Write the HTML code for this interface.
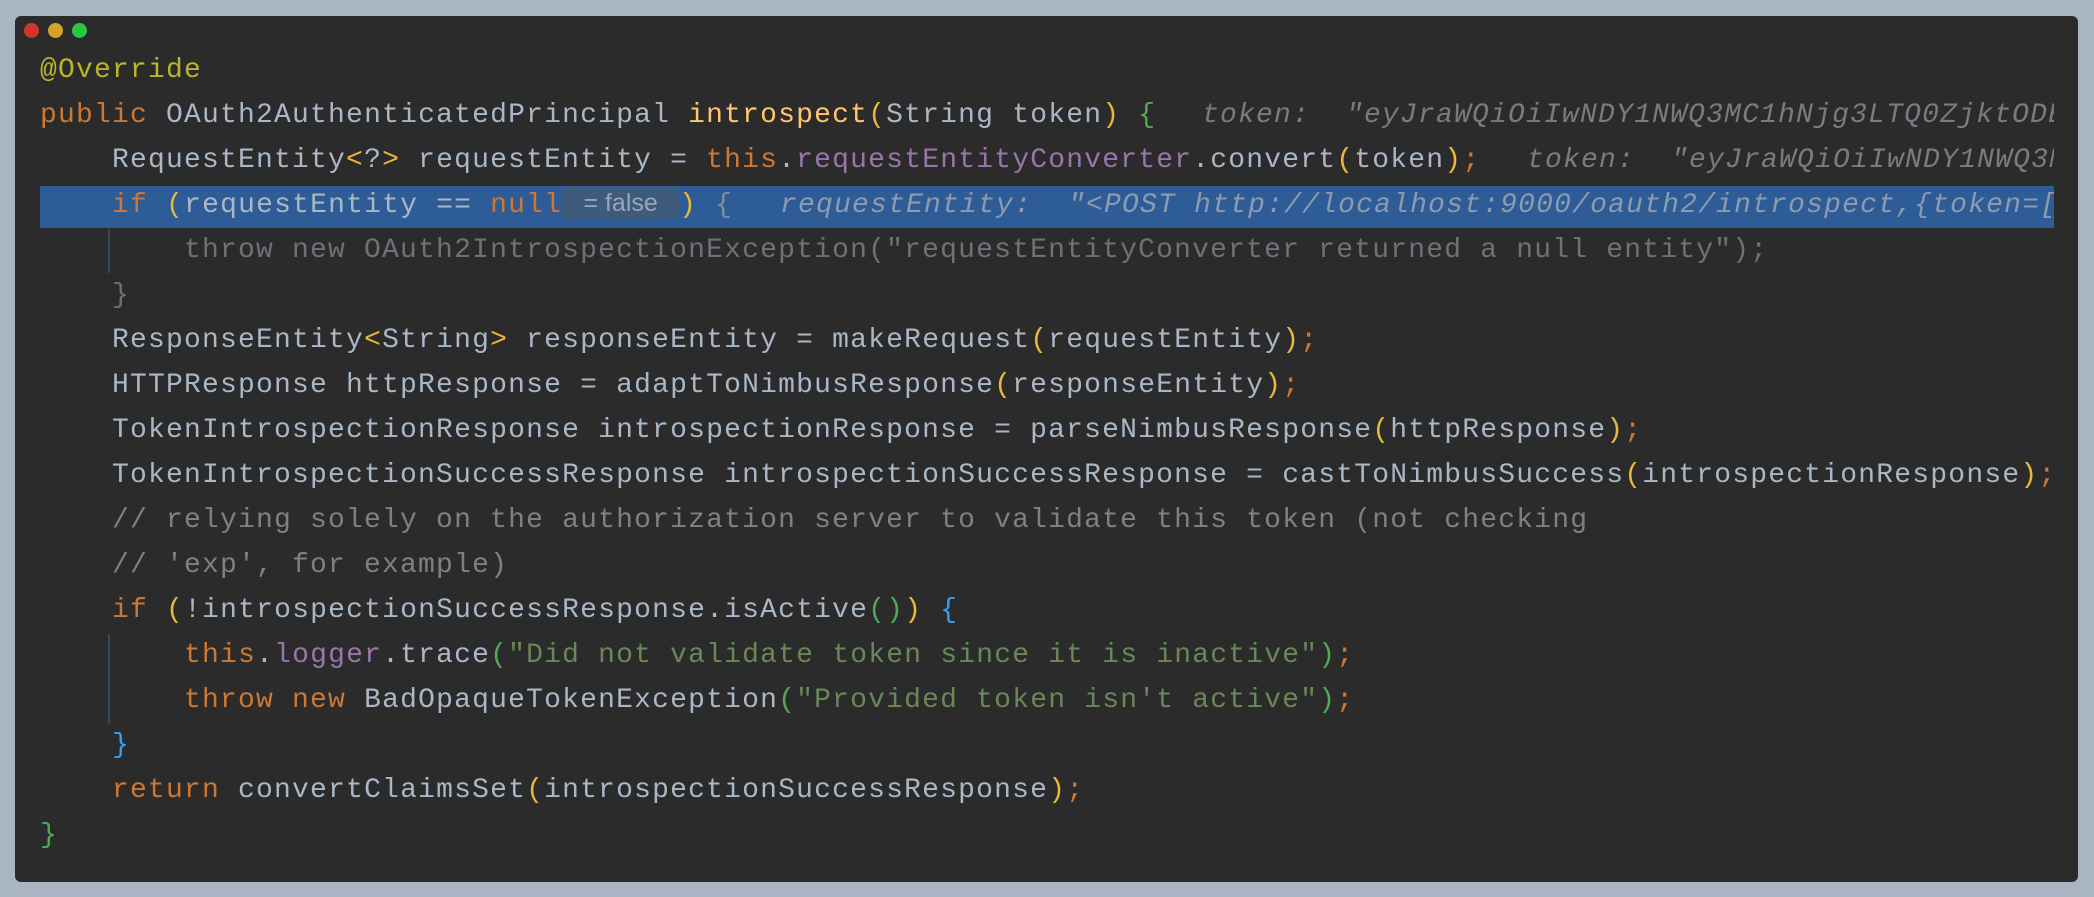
<!DOCTYPE html>
<html><head><meta charset="utf-8"><style>
html,body{margin:0;padding:0;}
body{width:2094px;height:897px;background:#aab5c2;position:relative;overflow:hidden;}
.win{position:absolute;left:15px;top:16px;width:2063px;height:866px;background:#2b2b2b;border-radius:6px;}
.dot{position:absolute;top:7px;width:15px;height:15px;border-radius:50%;}
.code{position:absolute;left:25px;top:16px;width:2014px;height:835px;overflow:hidden;}
.ln{position:absolute;left:0;height:45px;line-height:45px;white-space:pre;font-family:"Liberation Mono",monospace;font-size:28px;letter-spacing:1.2px;color:#a9b7c6;width:3000px;}
.k{color:#cc7832}.a{color:#bbb529}.m{color:#ffc66d}.f{color:#9876aa}.s{color:#6a8759}.c{color:#808080}
.y{color:#e8ba36}.g{color:#54a857}.b{color:#359ff4}.d{color:#6d7178}
.h{position:absolute;top:0;font-style:italic;color:#787c82;}
.hl{position:absolute;left:0;top:0;width:2014px;height:42px;background:#2e5c96;}
.box{display:inline-block;width:117px;height:31px;line-height:31px;background:#3e5b7c;border-radius:6px;color:#98a6b6;font-family:"Liberation Sans",sans-serif;font-size:25px;letter-spacing:0;text-align:center;vertical-align:middle;position:relative;top:-1px;}
.guide{position:absolute;width:2px;background:#34495e;}
</style></head><body>
<div class="win">
<div class="dot" style="left:9px;background:#d6332a"></div>
<div class="dot" style="left:33px;background:#d6a324"></div>
<div class="dot" style="left:57px;background:#27c93f"></div>
<div class="code">
<div class="guide" style="left:68px;top:197px;height:44px"></div>
<div class="guide" style="left:68px;top:602px;height:90px"></div>
<div class="ln" style="top:16px"><span class="a">@Override</span></div>
<div class="ln" style="top:61px"><span class="k">public</span> OAuth2AuthenticatedPrincipal <span class="m">introspect</span><span class="y">(</span>String token<span class="y">)</span> <span class="g">{</span><span class="h" style="left:1162px">token:  "eyJraWQiOiIwNDY1NWQ3MC1hNjg3LTQ0ZjktODE</span></div>
<div class="ln" style="top:106px">    RequestEntity<span class="y">&lt;</span>?<span class="y">&gt;</span> requestEntity = <span class="k">this</span>.<span class="f">requestEntityConverter</span>.convert<span class="y">(</span>token<span class="y">)</span><span class="k">;</span><span class="h" style="left:1487px">token:  "eyJraWQiOiIwNDY1NWQ3M</span></div>
<div class="ln" style="top:151px"><div class="hl" style="top:3px"></div><span style="position:relative">    <span class="k">if</span> <span class="y">(</span>requestEntity == <span class="k">null</span><span class="box">= false</span><span class="y">)</span> <span style="color:#7d8da3">{</span></span><span class="h" style="left:740px;color:#8b9bb2">requestEntity:  "&lt;POST http://localhost:9000/oauth2/introspect,{token=[e</span></div>
<div class="ln d" style="top:196px">        throw new OAuth2IntrospectionException("requestEntityConverter returned a null entity");</div>
<div class="ln d" style="top:241px">    }</div>
<div class="ln" style="top:286px">    ResponseEntity<span class="y">&lt;</span>String<span class="y">&gt;</span> responseEntity = makeRequest<span class="y">(</span>requestEntity<span class="y">)</span><span class="k">;</span></div>
<div class="ln" style="top:331px">    HTTPResponse httpResponse = adaptToNimbusResponse<span class="y">(</span>responseEntity<span class="y">)</span><span class="k">;</span></div>
<div class="ln" style="top:376px">    TokenIntrospectionResponse introspectionResponse = parseNimbusResponse<span class="y">(</span>httpResponse<span class="y">)</span><span class="k">;</span></div>
<div class="ln" style="top:421px">    TokenIntrospectionSuccessResponse introspectionSuccessResponse = castToNimbusSuccess<span class="y">(</span>introspectionResponse<span class="y">)</span><span class="k">;</span></div>
<div class="ln c" style="top:466px">    // relying solely on the authorization server to validate this token (not checking</div>
<div class="ln c" style="top:511px">    // 'exp', for example)</div>
<div class="ln" style="top:556px">    <span class="k">if</span> <span class="y">(</span>!introspectionSuccessResponse.isActive<span class="g">()</span><span class="y">)</span> <span class="b">{</span></div>
<div class="ln" style="top:601px">        <span class="k">this</span>.<span class="f">logger</span>.trace<span class="g">(</span><span class="s">"Did not validate token since it is inactive"</span><span class="g">)</span><span class="k">;</span></div>
<div class="ln" style="top:646px">        <span class="k">throw new</span> BadOpaqueTokenException<span class="g">(</span><span class="s">"Provided token isn't active"</span><span class="g">)</span><span class="k">;</span></div>
<div class="ln" style="top:691px">    <span class="b">}</span></div>
<div class="ln" style="top:736px">    <span class="k">return</span> convertClaimsSet<span class="y">(</span>introspectionSuccessResponse<span class="y">)</span><span class="k">;</span></div>
<div class="ln" style="top:781px"><span class="g">}</span></div>
</div>
</div>
</body></html>
